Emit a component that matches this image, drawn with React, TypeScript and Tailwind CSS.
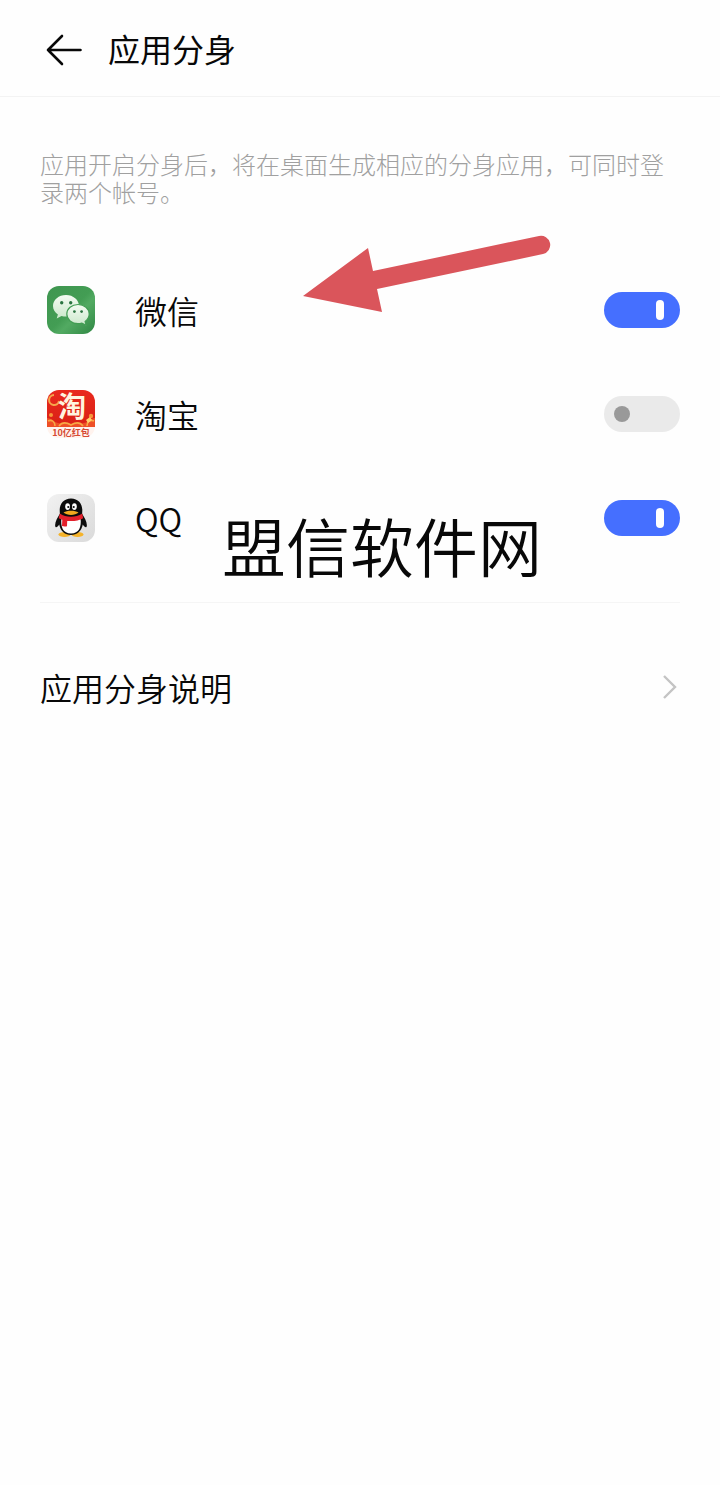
import { useState } from "react";
import type { ReactNode } from "react";

function BackIcon() {
  return (
    <svg viewBox="0 0 36 32" className="h-8 w-9" fill="none" stroke="#080808" strokeWidth="2.6" strokeLinecap="round" strokeLinejoin="round" aria-hidden="true">
      <path d="M16 2 2 16l14 14M2 16h32.500" />
    </svg>
  );
}

function WeChatIcon() {
  return (
    <svg viewBox="0 0 48 48" className="size-12" aria-hidden="true">
      <defs>
        <linearGradient id="wx-bg" x1="0" y1="0" x2="1" y2="1">
          <stop offset="0" stopColor="#3f9650" />
          <stop offset="0.5" stopColor="#439d54" />
          <stop offset="0.62" stopColor="#52aa62" />
          <stop offset="1" stopColor="#2f8743" />
        </linearGradient>
        <linearGradient id="wx-a" x1="0" y1="0" x2="0" y2="1">
          <stop offset="0" stopColor="#f4fbf2" />
          <stop offset="1" stopColor="#cbe8cb" />
        </linearGradient>
      </defs>
      <rect width="48" height="48" rx="12" fill="url(#wx-bg)" />
      <path d="M19 9C11.800 9 6 13.900 6 20c0 3.500 1.900 6.500 4.900 8.500L9.700 32.500l4.800-2.500c1.400.4 2.900.6 4.500.6 7.200 0 13-4.800 13-10.700S26.200 9 19 9Z" fill="url(#wx-a)" />
      <path d="M31 18.500c-6.300 0-11.200 4.200-11.200 9.600s4.900 9.600 11.200 9.600c1.400 0 2.700-.2 3.900-.6l4.300 2.300-1.100-3.900c2.500-1.700 4.100-4.400 4.100-7.400 0-5.400-4.900-9.600-11.200-9.600Z" fill="url(#wx-a)" stroke="#439d54" strokeWidth="1.2" />
      <g fill="#2b7440">
        <circle cx="14.700" cy="16.800" r="1.700" />
        <circle cx="23.700" cy="16.800" r="1.700" />
        <circle cx="27.400" cy="25.600" r="1.400" />
        <circle cx="34.600" cy="25.600" r="1.400" />
      </g>
    </svg>
  );
}

function TaobaoIcon() {
  return (
    <svg viewBox="0 0 48 48" className="size-12 overflow-visible" aria-hidden="true">
      <defs>
        <clipPath id="tb-clip">
          <rect width="48" height="48" rx="12" />
        </clipPath>
        <linearGradient id="tb-bg" x1="0" y1="0" x2="0" y2="1">
          <stop offset="0" stopColor="#e9291d" />
          <stop offset="1" stopColor="#d92016" />
        </linearGradient>
      </defs>
      <g clipPath="url(#tb-clip)">
        <rect width="48" height="48" fill="#fff3ee" />
        <path d="M0 0h48v37H0Z" fill="url(#tb-bg)" />
        <path d="M0 28c5 0 6 4 11 5 4 1 7-1 13 1 6-2 9 0 13-1 5-1 6-5 11-5v9H0Z" fill="#ee4f26" />
        <path d="M1 31c4-2 7 1 7 5M47 31c-4-2-7 1-7 5M12 36c3-4 7-4 12-1 5-3 9-3 12 1" fill="none" stroke="#f8a845" strokeWidth="1.600" />
        <circle cx="4" cy="25" r="2" fill="#f6953a" />
        <circle cx="44" cy="26" r="2.200" fill="#f6953a" />
        <path d="M7 5a5 5 0 1 0 5 6" fill="none" stroke="#f5a64b" strokeWidth="2" />
        <path d="m39 30 4-3 2 3-4 3Z" fill="#ffd06a" />
      </g>
      <text x="25" y="27" textAnchor="middle" fontSize="28" fontWeight="700" fill="#fff4df" className="font-['Noto_Sans_CJK_SC',sans-serif]">
        淘
      </text>
      <text x="24" y="46" textAnchor="middle" fontSize="9" fontWeight="700" fill="#d64a33" className="font-['Noto_Sans_CJK_SC',sans-serif]">
        10亿红包
      </text>
    </svg>
  );
}

function QQIcon() {
  return (
    <svg viewBox="0 0 48 48" className="size-12" aria-hidden="true">
      <defs>
        <linearGradient id="qq-bg" x1="0" y1="0" x2="1" y2="1">
          <stop offset="0" stopColor="#f1f1f1" />
          <stop offset="1" stopColor="#dadada" />
        </linearGradient>
      </defs>
      <rect width="48" height="48" rx="12" fill="url(#qq-bg)" />
      <ellipse cx="17.500" cy="40.500" rx="6" ry="2.400" fill="#f5b32a" />
      <ellipse cx="30.500" cy="40.500" rx="6" ry="2.400" fill="#f5b32a" />
      <path d="M24 4.500c-7 0-11.300 5-11.300 11.500 0 1.500.1 2.700.2 3.800-2.300 3.800-5.200 8.200-4.700 12.200.3 2.300 2.200 1.400 4-1.500C13.500 37 18 41 24 41s10.500-4 11.800-10.500c1.800 2.900 3.700 3.800 4 1.500.5-4-2.400-8.400-4.700-12.200.1-1.100.2-2.300.2-3.800C35.300 9.500 31 4.500 24 4.500Z" fill="#0c0c0c" />
      <path d="M14.500 24h19c1.200 9-1.500 15.500-9.500 15.500S13.300 33 14.500 24Z" fill="#fff" />
      <ellipse cx="20.600" cy="12.600" rx="2.400" ry="3.400" fill="#fff" />
      <ellipse cx="27.400" cy="12.600" rx="2.400" ry="3.400" fill="#fff" />
      <circle cx="21.300" cy="13" r="1.100" fill="#111" />
      <circle cx="26.700" cy="13" r="1.100" fill="#111" />
      <path d="M16.500 18.600c2-1.500 4.500-1.900 7.500-1.900s5.500.4 7.500 1.900c-1.800 1.600-4.500 2.300-7.500 2.300s-5.700-.7-7.500-2.300Z" fill="#f2a81f" />
      <path d="M12.800 19.500C16 21.800 20 22.800 24 22.800s8-1 11.200-3.300l1 4.700c-3.500 2-7.700 2.900-12.200 2.900-1.300 0-2.600-.1-3.800-.2l-.2 5.300c-1.700.5-3.500.4-5-.1l.3-6.400c-1.300-.4-2.500-.9-3.600-1.500Z" fill="#e3202b" />
    </svg>
  );
}

type App = { id: string; name: string; icon: ReactNode; enabled: boolean };

const apps: App[] = [
  { id: "wechat", name: "微信", icon: <WeChatIcon />, enabled: true },
  { id: "taobao", name: "淘宝", icon: <TaobaoIcon />, enabled: false },
  { id: "qq", name: "QQ", icon: <QQIcon />, enabled: true },
];

function AppRow({ app }: { app: App }) {
  const [on, setOn] = useState(app.enabled);
  return (
    <li className="flex h-26 items-center pl-[7px]">
      {app.icon}
      <label htmlFor={app.id} className="ml-10 flex-1 text-[32px] leading-10 font-[350]">
        {app.name}
      </label>
      <input
        id={app.id}
        type="checkbox"
        role="switch"
        checked={on}
        onChange={(e) => setOn(e.target.checked)}
        className="flex h-9 w-19 cursor-pointer appearance-none items-center rounded-full bg-[#eaeaea] px-2.5 before:size-4 before:rounded-full before:bg-[#999999] before:content-[''] checked:justify-end checked:bg-[#456fff] checked:px-4 checked:before:h-5 checked:before:w-2 checked:before:bg-white"
      />
    </li>
  );
}

export default function App() {
  return (
    <div className="min-h-screen bg-[#fefefe] font-['Noto_Sans_CJK_SC',sans-serif] text-[#080808]">
      <header className="flex items-center gap-[26px] border-b border-[#f3f3f3] px-[46px] pt-[26px] pb-[26px]">
        <button type="button" aria-label="返回" className="mt-1 cursor-pointer">
          <BackIcon />
        </button>
        <h1 className="text-[32px] leading-11 font-normal">应用分身</h1>
      </header>
      <main className="px-10 pt-[53px]">
        <p className="text-2xl leading-7 font-light text-[#a0a0a0]">
          应用开启分身后，将在桌面生成相应的分身应用，可同时登录两个帐号。
        </p>
        <section className="relative mt-13 border-b border-[#f5f5f5] pb-8">
          <ul>
            {apps.map((app) => (
              <AppRow key={app.id} app={app} />
            ))}
          </ul>
          <svg viewBox="0 0 250 78" className="pointer-events-none absolute -top-6 left-[262px] h-[78px] w-[250px]" fill="#da555b" aria-hidden="true">
            <path d="M1 62 66 14l5 23L237 2a9 9 0 0 1 4 18L75 55l5 23Z" />
          </svg>
          <p className="pointer-events-none absolute top-[242px] left-[182px] text-[64px] leading-[88px] font-[350] whitespace-nowrap">盟信软件网</p>
        </section>
        <a href="#about" className="mt-15 flex h-12 items-center justify-between pr-[3px] text-[32px] leading-10 font-[350]">
          应用分身说明
          <svg viewBox="0 0 14 24" className="h-6 w-3.5" fill="none" stroke="#c4c4c4" strokeWidth="2.400" aria-hidden="true">
            <path d="m1 1 11 11L1 23" />
          </svg>
        </a>
      </main>
    </div>
  );
}
